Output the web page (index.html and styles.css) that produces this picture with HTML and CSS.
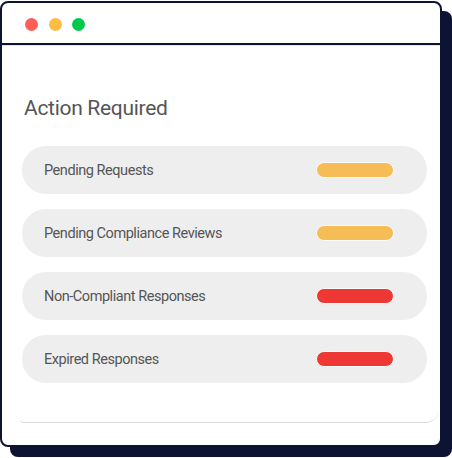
FILE: index.html
```html
<!DOCTYPE html>
<html>
<head>
<meta charset="utf-8">
<link rel="stylesheet" href="styles.css">
</head>
<body>
<div class="window">
  <div class="titlebar">
    <span class="dot dot-red"></span>
    <span class="dot dot-yellow"></span>
    <span class="dot dot-green"></span>
  </div>
  <div class="content">
    <h1 class="heading">Action Required</h1>
    <ul class="rows">
      <li class="row"><span class="label">Pending Requests</span><span class="bar bar-warn"></span></li>
      <li class="row"><span class="label">Pending Compliance Reviews</span><span class="bar bar-warn"></span></li>
      <li class="row"><span class="label">Non-Compliant Responses</span><span class="bar bar-danger"></span></li>
      <li class="row"><span class="label">Expired Responses</span><span class="bar bar-danger"></span></li>
    </ul>
    <div class="panel-line"></div>
  </div>
</div>
</body>
</html>
```
FILE: styles.css
```css
* { box-sizing: border-box; }
html, body {
  margin: 0;
  padding: 0;
  background: #ffffff;
}
body {
  width: 452px;
  height: 458px;
  overflow: hidden;
  font-family: Roboto, "Open Sans", sans-serif;
}
.window {
  margin-top: 1px;
  width: 442px;
  height: 446px;
  border: 2px solid #0c1333;
  border-radius: 8px;
  background: #ffffff;
  box-shadow: 10px 10px 0 0 #0c1333;
  display: flex;
  flex-direction: column;
}
.titlebar {
  height: 42px;
  flex: none;
  border-bottom: 2px solid #0c1333;
  display: flex;
  align-items: center;
  gap: 10.5px;
  padding: 2px 0 0 23px;
}
.dot {
  width: 13px;
  height: 13px;
  border-radius: 50%;
  display: block;
}
.dot-red { background: #ff5f57; }
.dot-yellow { background: #ffbc42; }
.dot-green { background: #02c94e; }
.content {
  flex: 1;
  padding: 0 13px 0 18px;
  border-top: 1px solid #e6e6e6;
}
.heading {
  margin: 49px 0 25px 4px;
  font-size: 21px;
  line-height: 26px;
  font-weight: 400;
  color: #555555;
  letter-spacing: -0.3px;
}
.rows {
  list-style: none;
  margin: 0;
  padding: 0 0 0 2px;
  display: flex;
  flex-direction: column;
  gap: 15px;
}
.row {
  height: 48px;
  border-radius: 24px;
  background: #eeeeee;
  display: flex;
  align-items: center;
  justify-content: space-between;
  padding: 0 33px 0 22px;
}
.label {
  font-size: 14.5px;
  color: #555555;
  letter-spacing: -0.45px;
}
.bar {
  width: 78px;
  height: 16px;
  border-radius: 8px;
  border: 1px solid #fbfbfb;
  display: block;
}
.bar-warn { background: #f6bc55; }
.bar-danger { background: #ee3834; }
.panel-line {
  height: 14px;
  margin: 26px -12px 0 0;
  border-bottom: 1px solid #dadada;
  border-bottom-right-radius: 16px;
  border-bottom-left-radius: 4px;
}
```
